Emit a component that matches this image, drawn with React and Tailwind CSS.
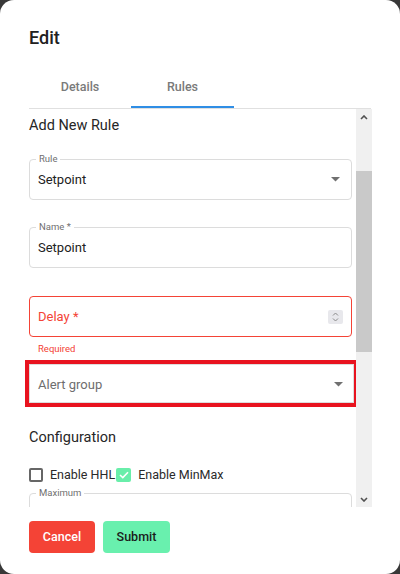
import React from 'react';

const FONT = { fontFamily: 'Roboto, "Liberation Sans", sans-serif' };

function Caret() {
  return (
    <svg width="9" height="5" viewBox="0 0 9 5" className="shrink-0">
      <path d="M0 0 L9 0 L4.5 4.5 Z" fill="#707070" />
    </svg>
  );
}

function OutlinedField({ label, value, placeholder, select, className = '' }) {
  return (
    <div className={`relative h-[41px] w-[323px] rounded-[4px] border border-[#dcdcdc] flex items-center pl-[8px] pr-[11px] ${className}`}>
      {label && (
        <span className="absolute -top-[7px] left-[6px] bg-white px-[3px] text-[9.5px] leading-[12px] text-[#707070]">
          {label}
        </span>
      )}
      <span className={`flex-1 text-[13px] ${value ? 'text-[#222]' : 'text-[#757575]'}`}>
        {value || placeholder}
      </span>
      {select && <Caret />}
    </div>
  );
}

function ScrollBar() {
  return (
    <div className="w-[16px] bg-[#f0f0f0] flex flex-col items-center">
      <div className="h-[16px] flex items-center justify-center">
        <svg width="8" height="5" viewBox="0 0 8 5">
          <path d="M1 4 L4 1 L7 4" fill="none" stroke="#505050" strokeWidth="1.6" />
        </svg>
      </div>
      <div className="h-[46px]" />
      <div className="h-[181px] w-full bg-[#c9c9c9]" />
      <div className="flex-1" />
      <div className="h-[16px] flex items-center justify-center">
        <svg width="8" height="5" viewBox="0 0 8 5">
          <path d="M1 1 L4 4 L7 1" fill="none" stroke="#505050" strokeWidth="1.6" />
        </svg>
      </div>
    </div>
  );
}

export default function App() {
  return (
    <div className="w-[400px] h-[574px] bg-[#383838] overflow-hidden" style={FONT}>
      <div className="h-full bg-white rounded-[14px] flex flex-col">
        {/* Title */}
        <div className="h-[64px] pt-[26px] px-[29px]">
          <h2 className="text-[18px] leading-[24px] font-medium text-[#212121]">Edit</h2>
        </div>

        {/* Tabs */}
        <div className="mx-[29px] flex border-b border-[#e0e0e0]">
          <div className="w-[102px] h-[44px] pt-[5px] flex items-center justify-center text-[12.5px] font-medium text-[#7a7a7a] border-b-2 border-transparent">
            Details
          </div>
          <div className="w-[103px] h-[44px] pt-[5px] flex items-center justify-center text-[12.5px] font-medium text-[#7a7a7a] border-b-2 border-[#2f8ee5]">
            Rules
          </div>
        </div>

        {/* Scrollable body */}
        <div className="h-[398px] ml-[25px] mr-[28px] flex">
          <div className="flex-1 overflow-hidden pl-[4px]">
            <div className="mt-[7px] text-[14.5px] leading-[20px] text-[#262626]">Add New Rule</div>

            <OutlinedField className="mt-[23px]" label="Rule" value="Setpoint" select />
            <OutlinedField className="mt-[27px]" label="Name *" value="Setpoint" />

            {/* Delay with error */}
            <div className="mt-[28px] h-[41px] w-[323px] rounded-[4px] border-[1.5px] border-[#f44336] flex items-center pl-[8px] pr-[8px]">
              <span className="flex-1 text-[13px] text-[#f44336]">Delay *</span>
              <div className="w-[15px] h-[14px] bg-[#e8e8ec] rounded-[2px] flex flex-col items-center justify-center gap-[2px]">
                <svg width="7" height="4" viewBox="0 0 7 4">
                  <path d="M1 3.5 L3.5 1 L6 3.5" fill="none" stroke="#8a8a8a" strokeWidth="1" />
                </svg>
                <svg width="7" height="4" viewBox="0 0 7 4">
                  <path d="M1 0.5 L3.5 3 L6 0.5" fill="none" stroke="#8a8a8a" strokeWidth="1" />
                </svg>
              </div>
            </div>
            <div className="mt-[6px] pl-[9px] text-[9.5px] leading-[12px] text-[#f44336]">Required</div>

            {/* Highlighted alert group */}
            <div className="mt-[5px] -ml-[4px] w-[333px] h-[47px] border-4 border-[#e8131f]">
              <div className="h-full w-[325px] border border-[#dcdcdc] flex items-center pl-[8px] pr-[10px] pt-[2px]">
                <span className="flex-1 text-[13px] text-[#6e6e6e]">Alert group</span>
                <Caret />
              </div>
            </div>

            <div className="mt-[21px] text-[14.5px] leading-[20px] text-[#262626]">Configuration</div>

            <div className="mt-[17px] h-[20px] flex items-center text-[12.5px] text-[#2a2a2a]">
              <div className="w-[14px] h-[14px] border-2 border-[#666] rounded-[2px]" />
              <span className="ml-[7px]">Enable HHL</span>
              <div className="ml-[1px] w-[15px] h-[14px] bg-[#69eeaa] rounded-[2px] flex items-center justify-center">
                <svg width="10" height="8" viewBox="0 0 10 8">
                  <path d="M1 4 L3.8 6.6 L9 1.2" fill="none" stroke="#fff" strokeWidth="1.6" />
                </svg>
              </div>
              <span className="ml-[7px]">Enable MinMax</span>
            </div>

            <div className="mt-[8px] relative h-[41px] w-[323px] rounded-[4px] border border-[#dcdcdc]">
              <span className="absolute -top-[7px] left-[6px] bg-white px-[3px] text-[9.5px] leading-[12px] text-[#707070]">
                Maximum
              </span>
            </div>
          </div>
          <ScrollBar />
        </div>

        {/* Actions */}
        <div className="pt-[14px] px-[29px] flex gap-[8px]">
          <button className="w-[66px] h-[32px] rounded-[4px] bg-[#f44336] text-white text-[12.5px] font-medium">
            Cancel
          </button>
          <button className="w-[67px] h-[32px] rounded-[4px] bg-[#69f0ae] text-[#1b1b1b] text-[12.5px] font-medium">
            Submit
          </button>
        </div>
      </div>
    </div>
  );
}
